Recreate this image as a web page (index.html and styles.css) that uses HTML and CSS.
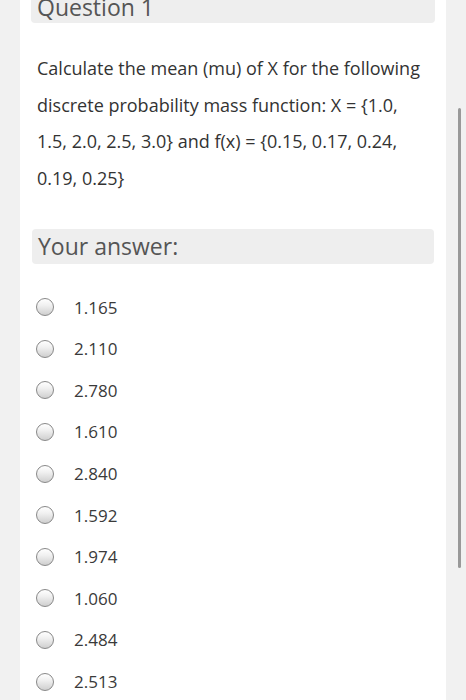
FILE: index.html
```html
<!DOCTYPE html>
<html lang="en">
<head>
<meta charset="utf-8">
<title>Question 1</title>
<link rel="stylesheet" href="styles.css">
</head>
<body>
<div class="card">
  <div class="q-title">Question 1</div>
  <p class="q-text">Calculate the mean (mu) of X for the following discrete probability mass function: X = {1.0, 1.5, 2.0, 2.5, 3.0} and f(x) = {0.15, 0.17, 0.24, 0.19, 0.25}</p>
  <div class="answer-label">Your answer:</div>
  <ul class="options">
    <li class="option"><span class="radio"></span><span class="opt-text">1.165</span></li>
    <li class="option"><span class="radio"></span><span class="opt-text">2.110</span></li>
    <li class="option"><span class="radio"></span><span class="opt-text">2.780</span></li>
    <li class="option"><span class="radio"></span><span class="opt-text">1.610</span></li>
    <li class="option"><span class="radio"></span><span class="opt-text">2.840</span></li>
    <li class="option"><span class="radio"></span><span class="opt-text">1.592</span></li>
    <li class="option"><span class="radio"></span><span class="opt-text">1.974</span></li>
    <li class="option"><span class="radio"></span><span class="opt-text">1.060</span></li>
    <li class="option"><span class="radio"></span><span class="opt-text">2.484</span></li>
    <li class="option"><span class="radio"></span><span class="opt-text">2.513</span></li>
  </ul>
</div>
<div class="scrollbar"></div>
</body>
</html>
```
FILE: styles.css
```css
html, body {
  margin: 0;
  padding: 0;
}
body {
  background: #f1f1f1;
  font-family: "Open Sans", "Noto Sans", sans-serif;
  color: #333;
  overflow: hidden;
  height: 700px;
}
.card {
  margin-left: 20px;
  width: 426px;
  background: #fff;
  min-height: 700px;
  padding-top: 0;
}
.q-title {
  margin: 0 11px;
  height: 23px;
  box-sizing: border-box;
  padding: 0 6px 8px;
  background: #eeeeee;
  border-radius: 0 0 4px 4px;
  font-size: 23px;
  line-height: 15px;
  color: #555;
}
.q-text {
  margin: 27px 0 0;
  padding: 0 17px;
  font-size: 18px;
  line-height: 36.6px;
  color: #333;
}
.answer-label {
  margin: 33px 12px 0;
  height: 35px;
  padding: 0 6px;
  background: #eeeeee;
  border-radius: 4px;
  font-size: 23px;
  line-height: 35px;
  color: #555;
}
.options {
  list-style: none;
  margin: 22px 0 0;
  padding: 0 0 0 16px;
}
.option {
  display: flex;
  align-items: center;
  height: 41.6px;
}
.radio {
  width: 16px;
  height: 16px;
  border-radius: 50%;
  border: 1px solid #888;
  background: linear-gradient(#ffffff 0%, #f0f0f0 40%, #cfcfcf 100%);
  flex: none;
}
.opt-text {
  margin-left: 20px;
  font-size: 17px;
  color: #3a3a3a;
}
.scrollbar {
  position: fixed;
  left: 458px;
  top: 108px;
  width: 3px;
  height: 460px;
  background: #999;
  border-radius: 2px;
}
```
